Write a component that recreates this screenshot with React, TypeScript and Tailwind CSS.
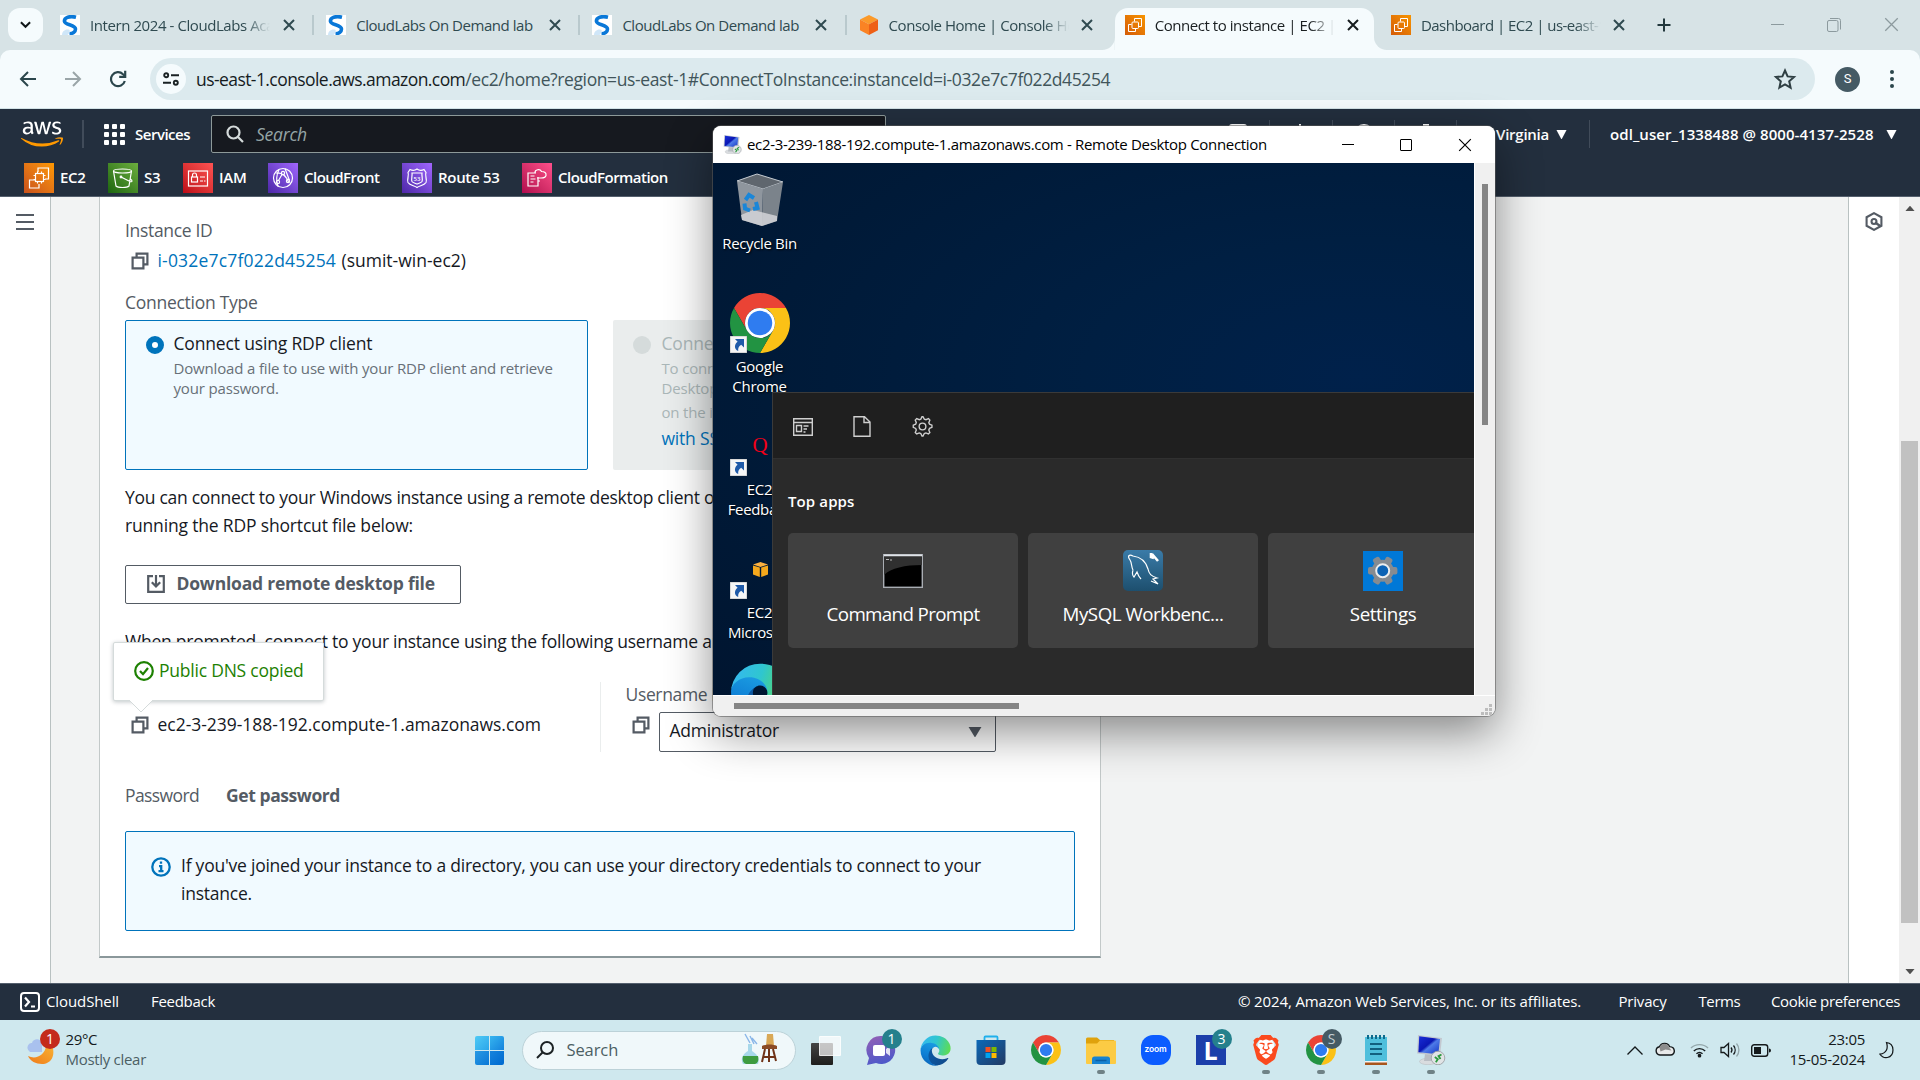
import type { ReactNode } from "react";
import { FaAws } from "react-icons/fa";
import { SiBrave } from "react-icons/si";

type P = { className?: string };

/* ---------- shared icons ---------- */

const Chrome = ({ className = "" }: P) => (
  <svg viewBox="0 0 48 48" className={className}>
    <path d="M24 12H44.78A24 24 0 0 0 3.22 12L13.6 30A12 12 0 0 1 24 12z" fill="#ea4335" />
    <path d="M34.4 30L24 48A24 24 0 0 0 44.78 12H24A12 12 0 0 1 34.4 30z" fill="#fbc116" />
    <path d="M13.6 30L3.22 12A24 24 0 0 0 24 48L34.4 30A12 12 0 0 1 13.6 30z" fill="#229342" />
    <circle cx="24" cy="24" r="12" fill="#fff" />
    <circle cx="24" cy="24" r="9.8" fill="#2f7cf0" />
  </svg>
);

const Edge = ({ className = "" }: P) => (
  <svg viewBox="0 0 264 264" className={className}>
    <defs>
      <linearGradient id="edgeA" x1="0" y1="0.3" x2="1" y2="0.7">
        <stop offset="0" stopColor="#0c59a4" />
        <stop offset="1" stopColor="#114a8b" />
      </linearGradient>
      <linearGradient id="edgeB" x1="0.6" y1="0" x2="0.3" y2="1">
        <stop offset="0" stopColor="#1b9de2" />
        <stop offset="0.6" stopColor="#0f7ed4" />
        <stop offset="1" stopColor="#0b64b8" />
      </linearGradient>
      <linearGradient id="edgeC" x1="0" y1="0.3" x2="1" y2="0.5">
        <stop offset="0" stopColor="#35b8f1" />
        <stop offset="0.5" stopColor="#2fc6cf" />
        <stop offset="1" stopColor="#5ddc56" />
      </linearGradient>
    </defs>
    <path fill="url(#edgeA)" d="M235.68 195.46a93.73 93.73 0 0 1-10.54 4.71 101.87 101.87 0 0 1-35.9 6.46c-47.32 0-88.54-32.55-88.54-74.32A31.48 31.48 0 0 1 117.13 105c-42.8 1.8-53.8 46.4-53.8 72.53 0 73.88 68.09 81.37 82.76 81.37 7.91 0 19.84-2.3 27-4.56l1.31-.44a128.34 128.34 0 0 0 66.6-52.8 4 4 0 0 0-5.32-5.64z" />
    <path fill="url(#edgeB)" d="M110.34 246.34A79.2 79.2 0 0 1 87.6 225a80.72 80.72 0 0 1 29.53-120c3.12-1.47 8.45-4.13 15.54-4a32.35 32.35 0 0 1 25.69 13 31.88 31.88 0 0 1 6.36 18.66c0-.21 24.46-79.6-80-79.6-43.9 0-80 41.66-80 78.21a130.15 130.15 0 0 0 12.11 56 128 128 0 0 0 156.38 67.11 75.55 75.55 0 0 1-62.78-8z" />
    <path fill="url(#edgeC)" d="M156.94 153.73c-.81 1.05-3.3 2.5-3.3 5.66 0 2.61 1.7 5.12 4.72 7.23 14.38 10 41.49 8.68 41.56 8.68a59.56 59.56 0 0 0 30.27-8.35 61.38 61.38 0 0 0 30.43-52.88c.26-22.41-8-37.31-11.34-43.91C228.11 28.92 182.36 5 132.6 5a128 128 0 0 0-128 126.2c.48-36.54 36.8-66.05 80-66.05 3.5 0 23.46.34 42 10.07 16.34 8.58 24.9 18.94 30.85 29.21 6.18 10.67 7.28 24.15 7.28 29.52s-2.74 13.33-7.79 19.78z" />
  </svg>
);

const RdpIcon = ({ className = "" }: P) => (
  <svg viewBox="0 0 30 30" className={className}>
    <defs>
      <linearGradient id="rdpScreen" x1="0" y1="0" x2="1" y2="1">
        <stop offset="0" stopColor="#1a2fd8" />
        <stop offset="0.45" stopColor="#0a17b4" />
        <stop offset="0.55" stopColor="#4e7be8" />
        <stop offset="1" stopColor="#1234c4" />
      </linearGradient>
    </defs>
    <ellipse cx="12" cy="26.500" rx="8.500" ry="3.200" fill="#d9dcdf" stroke="#b4b9bd" strokeWidth=".5" />
    <path d="M9 19h8l1 7H8z" fill="#b9bec4" />
    <path d="M2 0L26 3 24 21 1 18.500z" fill="#c3c8d0" />
    <path d="M3.200 1.300L24 3.900 22.300 19.200 2.400 17.200z" fill="url(#rdpScreen)" />
    <circle cx="22" cy="23" r="6.800" fill="#e1e4e6" stroke="#9da2a6" strokeWidth="0.9" />
    <path d="M18.800 22l3 2.200-2 3M25.500 19.500l-3 1.600 2 3" stroke="#2c9a3e" strokeWidth="1.800" fill="none" />
  </svg>
);

const Copy = ({ className = "" }: P) => (
  <svg viewBox="0 0 18 18" className={`size-[18px] shrink-0 ${className}`} fill="none" stroke="#545b64" strokeWidth="2.200">
    <path d="M1.600 5.600h10.800v10.800H1.600z" />
    <path d="M5.600 5V1.600h10.800v10.800H13" />
  </svg>
);

const Triangle = ({ className = "" }: P) => (
  <svg viewBox="0 0 12 9" preserveAspectRatio="none" className={className} fill="currentColor">
    <path d="M0.500 0h11L6.300 9h-.6z" />
  </svg>
);

const Cross = ({ className = "" }: P) => (
  <svg viewBox="0 0 12 12" className={className} fill="none" stroke="currentColor">
    <path d="M1 1l10 10M11 1L1 11" />
  </svg>
);

const Ec2Lines = () => (
  <g fill="none" stroke="#fff" strokeWidth="1.200">
    <path d="M11 17H5.500v8H15v-4" />
    <path d="M14 9V5h10.500v11H21" />
    <rect x="11.500" y="10.500" width="8" height="8" />
    <path d="M13.500 8.500v2M17.500 8.500v2M13.500 18.500v2M17.500 18.500v2M9.500 12.500h2M9.500 16.500h2M19.500 12.500h2M19.500 16.500h2" />
  </g>
);

const Ec2Favicon = () => (
  <div className="size-5 shrink-0 bg-linear-to-tr from-[#d45b07] to-[#f79400]">
    <svg viewBox="0 0 20 20" className="size-5" fill="none" stroke="#fff" strokeWidth="1">
      <path d="M6.500 9.500H3.500v7h7v-2.500M9.500 6.500V3.500h7v8h-2.500" />
      <rect x="7" y="7" width="6.500" height="6.500" rx="1" />
    </svg>
  </div>
);

const CloudLabsFavicon = () => (
  <svg viewBox="0 0 20 20" className="size-5 shrink-0">
    <rect width="20" height="20" fill="#fff" />
    <path d="M16 2.200C9 .5 4 3 4.500 6.500c.5 3.500 11 3 11 7.500 0 2.500-2.500 4.500-6 4.800" fill="none" stroke="#0a78d8" strokeWidth="3.600" />
    <path d="M2 20c0-4 4-6.500 7.500-5 1 2-1 4-2 5z" fill="#cfe6f8" />
  </svg>
);

const CubeFavicon = () => (
  <svg viewBox="0 0 20 20" className="size-5 shrink-0">
    <path d="M10 0l9 4.500L10 9.200 1 4.500z" fill="#fb9a2a" />
    <path d="M1 4.500l9 4.700V20l-9-4.700z" fill="#fa8324" />
    <path d="M19 4.500l-9 4.700V20l9-4.700z" fill="#ee6016" />
  </svg>
);

/* ---------- browser chrome ---------- */

function Tab({ icon, title, active, sep, ls }: { icon: ReactNode; title: string; active?: boolean; sep?: boolean; ls: string }) {
  return (
    <div className="relative flex h-[42px] w-[266.2px] shrink-0 items-center pb-[8px] pl-[12px]">
      {active && (
        <>
          <div className="absolute top-0 right-[5px] bottom-0 left-[2px] rounded-t-[13px] bg-[#f5fbfd]" />
          <div className="absolute bottom-0 -left-[11px] size-[13px] rounded-br-[13px] shadow-[5px_5px_0_4px_#f5fbfd] [clip-path:inset(0)]" />
          <div className="absolute -right-[8px] bottom-0 size-[13px] rounded-bl-[13px] shadow-[-5px_5px_0_4px_#f5fbfd] [clip-path:inset(0)]" />
        </>
      )}
      <div className="relative flex w-full items-center">
        {icon}
        <div className={`ml-[10px] w-[180px] overflow-hidden text-[15px] leading-5 whitespace-nowrap ${ls} ${active ? "text-[#1a1f21]" : "text-[#2f4a50]"} ${title.includes("Demand") ? "" : "[mask-image:linear-gradient(90deg,#000_155px,transparent_180px)]"}`}>{title}</div>
        <Cross className={`ml-[12.500px] size-[12px] shrink-0 stroke-2 ${active ? "text-[#161c1e]" : "text-[#2f4a50]"}`} />
      </div>
      {sep && <div className="absolute top-[7px] right-0 h-5 w-[2px] bg-[#b9c9cd]" />}
    </div>
  );
}

function BrowserTop() {
  return (
    <>
      <div className="flex h-[50px] items-start bg-[#d7e3e6] pt-[8px] pl-[8px]">
        <div className="flex h-[34px] w-[35px] items-center justify-center rounded-[12px] bg-[#f5fbfd]">
          <svg viewBox="0 0 12 8" className="w-[11px]" fill="none" stroke="#101719" strokeWidth="2.200"><path d="M1 1.300l5 5 5-5" /></svg>
        </div>
        <div className="ml-[5px] flex">
          <Tab icon={<CloudLabsFavicon />} title="Intern 2024 - CloudLabs Academy" sep ls="tracking-[-0.42px]" />
          <Tab icon={<CloudLabsFavicon />} title="CloudLabs On Demand lab" sep ls="tracking-[-0.45px]" />
          <Tab icon={<CloudLabsFavicon />} title="CloudLabs On Demand lab" sep ls="tracking-[-0.45px]" />
          <Tab icon={<CubeFavicon />} title="Console Home | Console Home" ls="tracking-[-0.45px]" />
          <Tab icon={<Ec2Favicon />} title="Connect to instance | EC2 | us-east" active ls="tracking-[-0.45px]" />
          <Tab icon={<Ec2Favicon />} title="Dashboard | EC2 | us-east-1" ls="tracking-[-0.53px]" />
        </div>
        <svg viewBox="0 0 14 14" className="mt-[10px] ml-[11.500px] size-[14px]" stroke="#22383d" strokeWidth="2"><path d="M7 .5v13M.5 7h13" /></svg>
        <div className="ml-auto flex items-center gap-[43px] pt-[9px] pr-[21px] text-[#8c9a9e]">
          <div className="h-px w-[13px] bg-current" />
          <svg viewBox="0 0 14 14" className="size-[14px]" fill="none" stroke="currentColor"><rect x=".5" y="2.500" width="10.500" height="11" rx="1.500" /><path d="M3 .5h8.500a2 2 0 0 1 2 2v9" /></svg>
          <Cross className="size-[15px]" />
        </div>
      </div>
      <div className="bg-[#d7e3e6]">
        <div className="flex h-[59px] items-center rounded-t-[10px] border-b border-[#d3e3e7] bg-[#f5fbfd]">
          <svg viewBox="0 0 18 16" className="ml-[19px] h-[16px] w-[18px]" fill="none" stroke="#2b464c" strokeWidth="2"><path d="M17 8H2M9 1L2 8l7 7" /></svg>
          <svg viewBox="0 0 18 16" className="ml-[27px] h-[16px] w-[18px]" fill="none" stroke="#9aa5a8" strokeWidth="2"><path d="M1 8h15M9 1l7 7-7 7" /></svg>
          <svg viewBox="0 0 18 18" className="ml-[27px] size-[18px]" fill="none" stroke="#2b464c" strokeWidth="2.200"><path d="M15.800 11A7 7 0 1 1 14 4.200L16 6" /><path d="M16.200 0.800v6H10.200" /></svg>
          <div className="ml-[23px] flex h-[42px] w-[1665px] items-center rounded-full bg-[#dceaee] pl-[6px]">
            <div className="flex size-[30px] items-center justify-center rounded-full bg-[#f5fbfd]">
              <svg viewBox="0 0 16 14" className="w-[16px]" fill="none" stroke="#1a2224" strokeWidth="1.900"><circle cx="3.200" cy="3.200" r="2" /><path d="M8 3.200h8M0 10.800h8" /><circle cx="12.800" cy="10.800" r="2" /></svg>
            </div>
            <div className="ml-[10px] text-[17.5px] leading-6 whitespace-nowrap text-[#41555a]">
              <span className="tracking-[-0.57px] text-[#161c1e]">us-east-1.console.aws.amazon.com</span><span className="tracking-[-0.385px]">/ec2/home?region=us-east-1#ConnectToInstance:instanceId=i-032e7c7f022d45254</span>
            </div>
            <svg viewBox="0 0 24 24" className="mr-[18px] ml-auto size-[24px]" fill="none" stroke="#2f3f43" strokeWidth="2"><path d="M12 3.500l2.600 5.900 6.400.6-4.800 4.300 1.400 6.300L12 17.300l-5.600 3.300 1.400-6.300L3 10l6.400-.6z" /></svg>
          </div>
          <div className="ml-[20px] flex size-[25px] items-center justify-center rounded-full bg-[#455a64] font-['Roboto'] text-[13px] text-white">S</div>
          <div className="ml-[30px] flex flex-col gap-[3px]"><i className="size-1 rounded-full bg-[#2b464c]" /><i className="size-1 rounded-full bg-[#2b464c]" /><i className="size-1 rounded-full bg-[#2b464c]" /></div>
        </div>
      </div>
    </>
  );
}

/* ---------- AWS console ---------- */

function Fav({ w, bg, label, ls, children }: { w: string; bg: string; label: string; ls: string; children: ReactNode }) {
  return (
    <div className={`flex shrink-0 items-center ${w}`}>
      <svg viewBox="0 0 30 30" className={`size-[30px] ${bg}`} fill="none" stroke="#fff" strokeWidth="1.200">{children}</svg>
      <span className={`-mt-px ml-[6px] whitespace-nowrap ${ls}`}>{label}</span>
    </div>
  );
}

function AwsHeader() {
  return (
    <div className="h-[88px] border-b border-[#545f6d] bg-[#232f3e] text-[15px] leading-5 font-semibold text-white">
      <div className="flex h-[50px] items-center">
        <div className="relative ml-[21px] h-[34px] w-[42px]">
          <FaAws className="absolute inset-0 size-[42px] -translate-y-[4px] text-white [clip-path:inset(0_0_42%_0)]" />
          <FaAws className="absolute inset-0 size-[42px] -translate-y-[4px] text-[#ff9900] [clip-path:inset(58%_0_0_0)]" />
        </div>
        <div className="ml-[19px] h-[28px] w-[2px] bg-[#414c5a]" />
        <div className="ml-[20px] grid grid-cols-3 gap-[3px]">
          {Array.from({ length: 9 }, (_, i) => <i key={i} className="size-[5px] rounded-[1px] bg-white" />)}
        </div>
        <span className="ml-[10px] w-[76px] tracking-[-0.49px]">Services</span>
        <div className="flex h-[38px] w-[675px] items-center rounded-[2px] border border-[#8d9999] bg-[#16191f]">
          <svg viewBox="0 0 18 18" className="ml-[14px] size-[18px]" fill="none" stroke="#d5dbdb" strokeWidth="2.200"><circle cx="7.500" cy="7.500" r="6" /><path d="M12 12l5 5" /></svg>
          <span className="ml-[12px] text-[17.500px] font-normal tracking-[-0.230px] text-[#95a5a6] italic">Search</span>
        </div>
        <svg viewBox="0 0 18 20" className="ml-[343px] h-[20px] w-[18px]" fill="none" stroke="#fff" strokeWidth="2"><rect x="1" y="1" width="16" height="18" rx="2" /></svg>
        <div className="ml-[22px] h-[28px] w-px bg-[#414c5a]" />
        <svg viewBox="0 0 18 20" className="ml-[21px] h-[20px] w-[18px]" fill="none" stroke="#fff" strokeWidth="2"><path d="M9 0v3M3 15V9a6 6 0 0 1 12 0v6z" /></svg>
        <div className="ml-[23px] h-[28px] w-px bg-[#414c5a]" />
        <svg viewBox="0 0 20 20" className="ml-[21px] size-[20px]" fill="none" stroke="#fff" strokeWidth="2"><circle cx="10" cy="10" r="9" /></svg>
        <div className="ml-[20px] h-[28px] w-px bg-[#414c5a]" />
        <svg viewBox="0 0 20 20" className="ml-[21px] size-[20px]" fill="none" stroke="#fff" strokeWidth="2"><path d="M8 1h4v3l4 2 3-1v5l-3 4-4 4H8l-5-6V6l5-2z" /></svg>
        <div className="ml-[20px] h-[28px] w-px bg-[#414c5a]" />
        <span className="ml-[20px] w-[72px] text-right tracking-[-0.250px] whitespace-nowrap">N. Virginia</span>
        <Triangle className="ml-[7px] h-[9px] w-[11px]" />
        <div className="ml-[22px] h-[28px] w-px bg-[#414c5a]" />
        <span className="ml-[20px] w-[268px] tracking-[0.070px] whitespace-nowrap">odl_user_1338488 @ 8000-4137-2528</span>
        <Triangle className="ml-[8px] h-[9px] w-[11px]" />
      </div>
      <div className="flex h-[37px] items-center pl-[24px]">
        <Fav w="w-[84px]" bg="bg-linear-to-tr from-[#c8511b] to-[#ff9900]" label="EC2" ls="tracking-[-0.3px]"><Ec2Lines /></Fav>
        <Fav w="w-[75px]" bg="bg-linear-to-tr from-[#1b660f] to-[#6cae3e]" label="S3" ls="tracking-[-0.3px]">
          <ellipse cx="14.500" cy="8" rx="9" ry="2" /><path d="M5.500 8l2.500 15c2 2 11 2 13 0l2.500-15M13 14l9 4.500c2 .8 3-.5.5-2.500" /><circle cx="13" cy="14" r=".8" />
        </Fav>
        <Fav w="w-[85px]" bg="bg-linear-to-tr from-[#bd0816] to-[#ff5252]" label="IAM" ls="tracking-[-0.3px]">
          <rect x="5.500" y="8" width="19" height="15" /><rect x="8.500" y="14" width="6" height="5" /><path d="M9.500 14v-2a2 2 0 0 1 4 0v2M17 14h5M17 18h3M21 18h1.500" />
        </Fav>
        <Fav w="w-[134px]" bg="bg-linear-to-tr from-[#4d27a8] to-[#a166ff]" label="CloudFront" ls="tracking-[-0.530px]">
          <circle cx="15" cy="15" r="9.500" /><circle cx="15" cy="10" r="1.600" /><circle cx="10" cy="19" r="1.600" /><circle cx="20" cy="18" r="1.600" /><path d="M14 11.500l-3.500 6M16 11.500l3.500 5M11 6.500c-3 6-3 11-1 17M8 10c6-1 11 4 13 10M17 5.500l4.500 12" />
        </Fav>
        <Fav w="w-[120px]" bg="bg-linear-to-tr from-[#4d27a8] to-[#a166ff]" label="Route 53" ls="tracking-[-0.3px]">
          <path d="M8 6.500c2 1 5 1 7-.5 2 1.500 5 1.500 7 .5l2 3c-1.500 3 1.500 7 0 10-2 3-6 3-9 5-3-2-7-2-9-5-1.500-3 1.500-7 0-10z" /><path d="M10 10h10c-.5 3 1 6 0 8.500-1 1.500-3 1.500-5 2.500-2-1-4-1-5-2.500-1-2.500.5-5.500 0-8.500z" /><text x="15" y="17.500" textAnchor="middle" fontSize="6" fill="#fff" stroke="none">53</text>
        </Fav>
        <Fav w="w-[200px]" bg="bg-linear-to-tr from-[#b0084d] to-[#ff4f8b]" label="CloudFormation" ls="tracking-[-0.530px]">
          <path d="M14 10H6v13h10V14M8.500 13h4M8.500 16h5M8.500 19h3M13 9.500c0-3 5-4 6.500-1 3 0 5 1.500 4.500 4-.5 2-2.500 2.500-5 2.500h-4M16 18h2" />
        </Fav>
      </div>
    </div>
  );
}

function Tooltip() {
  return (
    <div className="absolute top-[445px] left-[13px] z-10 h-[59px] w-[211px] rounded-[2px] border border-[#d5dbdb] bg-white shadow-[0_1px_4px_rgba(0,28,36,0.25)]">
      <div className="flex h-full items-center pb-px pl-[20px]">
        <svg viewBox="0 0 20 20" className="size-5" fill="none" stroke="#1d8102" strokeWidth="2.200"><circle cx="10" cy="10" r="8.800" /><path d="M6 10l3 3.200 5-6.200" /></svg>
        <span className="ml-[5px] text-[17.500px] tracking-[-0.220px] text-[#1d8102]">Public DNS copied</span>
      </div>
      <svg viewBox="0 0 26 14" className="absolute top-[56px] left-[14px] h-[14px] w-[26px]"><path d="M1 1l12 12L25 1" fill="#fff" stroke="#d5dbdb" /><path d="M0 0h26v1H0z" fill="#fff" /></svg>
    </div>
  );
}

function ConnectCard() {
  return (
    <div className="relative ml-[48px] h-[761px] w-[1002px] border-x border-b-2 border-[#c3c9c9] border-b-[#8a979a] bg-white pt-[20px] pr-[24px] pl-[25px] text-[17.500px] leading-[27.500px] text-[#16191f]">
      <div className="tracking-[-0.320px] text-[#545b64]">Instance ID</div>
      <div className="mt-[2.500px] flex items-center pl-[6px] whitespace-nowrap">
        <Copy />
        <span className="ml-[8.500px] w-[184px] tracking-[0.190px] text-[#0073bb]">i-032e7c7f022d45254</span>
        <span>(sumit-win-ec2)</span>
      </div>
      <div className="mt-[14px] tracking-[-0.270px] text-[#545b64]">Connection Type</div>
      <div className="mt-[4px] -ml-[0.500px] flex gap-[25px]">
        <div className="flex h-[150px] w-[463px] shrink-0 rounded-[2px] border border-[#0073bb] bg-[#f1faff] pt-[9px] pl-[20px]">
          <div className="mt-[6px] size-[18px] shrink-0 rounded-full border-[6px] border-[#0073bb] bg-white" />
          <div className="ml-[10px]">
            <div className="tracking-[-0.170px]">Connect using RDP client</div>
            <div className="w-[400px] pt-[0.500px] text-[15px] leading-5 tracking-[-0.160px] text-[#687078]">Download a file to use with your RDP client and retrieve<br />your password.</div>
          </div>
        </div>
        <div className="flex h-[150px] w-[463px] shrink-0 rounded-[2px] bg-[#eaeded] pt-[10px] pl-[20.500px]">
          <div className="mt-[6px] size-[18px] shrink-0 rounded-full bg-[#d5dbdb]" />
          <div className="ml-[10.500px] text-[#aab7b8]">
            <div className="tracking-[-0.200px]">Connect using Fleet Manager</div>
            <div className="pt-[0.500px] text-[15px] leading-5 tracking-[-0.170px]">To connect to the instance using Fleet Manager Remote<br />Desktop, the SSM Agent must be installed and running</div>
            <div className="pt-px text-[15px] leading-[27px] tracking-[-0.170px]">on the instance. For more information, see Working</div>
            <div className="-mt-px tracking-[-0.200px] text-[#0073bb]">with SSM Agent</div>
          </div>
        </div>
      </div>
      <div className="mt-[14px] tracking-[-0.280px] whitespace-nowrap">You can connect to your Windows instance using a remote desktop client of your choice, and by downloading and<br /><span className="tracking-[-0.170px]">running the RDP shortcut file below:</span></div>
      <div className="mt-[26px] -ml-[0.500px] flex h-[39px] w-[336px] items-center rounded-[2px] border border-[#545b64] pb-px pl-[21px] font-bold tracking-[-0.210px] text-[#545b64]">
        <svg viewBox="0 0 18 18" className="size-[18px]" fill="none" stroke="#545b64" strokeWidth="2.200"><path d="M6 1.200H1.200v15.600h15.600V1.200H12M9 0v11M4.800 7.200L9 11.400l4.200-4.200" /></svg>
        <span className="ml-[12px]">Download remote desktop file</span>
      </div>
      <div className="mt-[24px] tracking-[-0.240px] whitespace-nowrap">When prompted, connect to your instance using the following username and password:</div>
      <Tooltip />
      <div className="mt-[26px] flex h-[70px]">
        <div className="w-[476px] border-r border-[#eaeded]">
          <div className="-mt-[4px] tracking-[-0.250px] text-[#545b64]">Public DNS</div>
          <div className="mt-[6px] flex items-center pl-[6px]"><Copy /><span className="ml-[8.500px] tracking-[-0.030px]">ec2-3-239-188-192.compute-1.amazonaws.com</span></div>
        </div>
        <div className="pl-[24.500px]">
          <div className="-mt-px tracking-[-0.350px] text-[#545b64]">Username Info</div>
          <div className="mt-px flex items-start pl-[6px]">
            <Copy className="mt-[7px]" />
            <div className="mt-[3px] ml-[9px] flex h-[40px] w-[337px] items-center justify-between rounded-[2px] border border-[#545b64] pr-[13px] pl-[10px]">
              <span className="-mt-[3px] tracking-[-0.280px]">Administrator</span>
              <Triangle className="h-[10px] w-[14px] text-[#545b64]" />
            </div>
          </div>
        </div>
      </div>
      <div className="mt-[30px] flex text-[#545b64]">
        <span className="w-[101px] tracking-[-0.580px]">Password</span>
        <span className="font-bold tracking-[-0.420px]">Get password</span>
      </div>
      <div className="mt-[22px] -ml-[0.500px] flex h-[100px] w-[950px] rounded-[2px] border border-[#0073bb] bg-[#f1faff] pt-[20px] pl-[25px]">
        <svg viewBox="0 0 20 20" className="mt-[5px] size-5 shrink-0" fill="none" stroke="#0073bb" strokeWidth="2.300"><circle cx="10" cy="10" r="8.700" /><path d="M10 4.500v2.200M8 9.200h2.200v5M7.500 14.200h5" /></svg>
        <div className="ml-[10.500px] tracking-[-0.235px] whitespace-nowrap">If you've joined your instance to a directory, you can use your directory credentials to connect to your<br />instance.</div>
      </div>
    </div>
  );
}

function Console() {
  return (
    <div className="flex h-[786px] overflow-hidden">
      <div className="w-[51px] border-r border-[#b9c1c1] bg-white pt-[17px] pl-[16px]">
        <div className="flex w-[18px] flex-col gap-[5px]"><i className="h-[2px] bg-[#545b64]" /><i className="h-[2px] bg-[#545b64]" /><i className="h-[2px] bg-[#545b64]" /></div>
      </div>
      <div className="w-[1797px] bg-[#f2f3f3]"><ConnectCard /></div>
      <div className="w-[51px] border-l border-[#b9c1c1] bg-white pt-[15px] pl-[16px]">
        <svg viewBox="0 0 18 20" className="h-[19px] w-[18px]" fill="none" stroke="#545b64" strokeWidth="2.200"><path d="M9 1.200l7.800 4.300v9L9 18.800 1.200 14.500v-9z" /><circle cx="9" cy="10" r="2.600" /><path d="M10 11l6 4" strokeWidth="2.600" /></svg>
      </div>
      <div className="flex w-[21px] flex-col items-center bg-[#f0f0f0] pt-[9px] pb-[9px] text-[#505050]">
        <Triangle className="h-[5px] w-[10px] rotate-180" />
        <div className="mt-[230px] h-[482px] w-[17px] bg-[#c1c1c1]" />
        <Triangle className="mt-auto h-[5px] w-[10px]" />
      </div>
    </div>
  );
}

function AwsFooter() {
  return (
    <div className="flex h-[37px] items-center border-t border-[#545f6d] bg-[#232f3e] pb-px text-[15px] font-medium whitespace-nowrap text-white">
      <svg viewBox="0 0 20 20" className="ml-[20px] size-5" fill="none" stroke="#fff" strokeWidth="2"><rect x="1" y="1" width="18" height="18" rx="3" /><path d="M5 5.500l4 4.500-4 4.500M11 14.500h4" strokeWidth="2.200" /></svg>
      <span className="ml-[6px] w-[105px] tracking-[-0.100px]">CloudShell</span>
      <span className="tracking-[-0.290px]">Feedback</span>
      <div className="ml-auto flex pr-[20px]">
        <span className="w-[380.500px] tracking-[-0.130px]">© 2024, Amazon Web Services, Inc. or its affiliates.</span>
        <span className="w-[80px] tracking-[-0.200px]">Privacy</span>
        <span className="w-[72.500px] tracking-[-0.400px]">Terms</span>
        <span className="w-[129px] tracking-[-0.340px]">Cookie preferences</span>
      </div>
    </div>
  );
}

/* ---------- remote desktop window ---------- */

const Shortcut = () => (
  <svg viewBox="0 0 17 17" className="absolute bottom-0 left-0 size-[17px]">
    <rect width="17" height="17" fill="#f6f6f6" stroke="#b9b9b9" />
    <path d="M5 3h9v8.500l-2.800-2.800C8.500 10.500 8 12 8.200 15 4 13 4 8.500 7.600 5.700z" fill="#1f5aa8" />
  </svg>
);

function DesktopItem({ children, label, shortcut, ls = "tracking-[-0.35px]" }: { children: ReactNode; label: ReactNode; shortcut?: boolean; ls?: string }) {
  return (
    <div className="flex h-[123px] w-[94px] shrink-0 flex-col items-center">
      <div className="relative flex size-[60px] items-center justify-center">{children}{shortcut && <Shortcut />}</div>
      <div className={`mt-[2.500px] -ml-px text-center text-[15px] leading-5 whitespace-nowrap text-white [text-shadow:1px_1px_2px_#000] ${ls}`}>{label}</div>
    </div>
  );
}

function AppCard({ label, ls, children }: { label: string; ls: string; children: ReactNode }) {
  return (
    <div className="flex h-[115px] w-[230px] shrink-0 flex-col items-center rounded-[5px] bg-[#404040] pt-[17px]">
      <div className="flex h-[41px] items-center justify-center">{children}</div>
      <div className={`mt-[10px] text-[18.750px] leading-[26px] text-white ${ls}`}>{label}</div>
    </div>
  );
}

const GEAR = "M10 1.500l1.200 2.300 1.600.5 2.400-1 1.300 1.400-1 2.400.7 1.500 2.300 1v2l-2.300 1-.7 1.500 1 2.400-1.400 1.400-2.400-1-1.500.6-1.200 2.300H9l-1.100-2.300-1.500-.6-2.400 1-1.400-1.400 1-2.400-.6-1.500-2.300-1v-2l2.300-1 .6-1.500-1-2.400L4 3.300l2.400 1 1.500-.5L9 1.500z";

function RdpWindow() {
  return (
    <div className="absolute top-[126px] left-[713px] h-[590px] w-[782px] overflow-visible rounded-[8px] shadow-[0_0_0_1px_rgba(90,90,90,0.55),0_16px_46px_rgba(0,0,0,0.45)]">
      <div className="flex h-full flex-col overflow-hidden rounded-[8px] bg-[#f0f0f0]">
        <div className="flex h-[37px] shrink-0 items-center bg-white pl-[10px] text-black">
          <RdpIcon className="size-[19px]" />
          <span className="ml-[5px] text-[15px] tracking-[-0.325px] whitespace-nowrap">ec2-3-239-188-192.compute-1.amazonaws.com - Remote Desktop Connection</span>
          <div className="ml-auto flex items-center gap-[46px] pr-[23px]">
            <div className="h-px w-[12px] bg-black" />
            <div className="size-[12px] rounded-[1px] border border-black" />
            <Cross className="size-[14px]" />
          </div>
        </div>
        <div className="flex h-[532px] shrink-0">
          <div className="relative h-[532px] w-[761px] overflow-hidden bg-[radial-gradient(ellipse_at_85%_40%,#00214b_0%,#001f42_30%,#001a38_65%,#001530_100%)]">
            <div className="flex flex-col pt-[7px]">
              <DesktopItem label="Recycle Bin">
                <svg viewBox="0 0 46 54" className="h-[54px] w-[46px]">
                  <path d="M0 8L20 1 46 9 26 16z" fill="#5f666e" stroke="#c6ccd2" />
                  <path d="M0 8l26 8-1 37L5 47z" fill="#8f969e" />
                  <path d="M46 9l-20 7-1 37 15-5z" fill="#7b838b" />
                  <path d="M4 42l12-5 24 6v5l-15 5-20-6z" fill="#d3d5d8" opacity=".85" />
                  <g fill="none" stroke="#1a86d8" strokeWidth="4"><path d="M8.500 27l3.500-5 5 3M19 29l1.500 6-4.500 1M13 37.500l-5-2-.500-5" /></g>
                </svg>
              </DesktopItem>
              <DesktopItem label={<>Google<br />Chrome</>} shortcut ls="tracking-[-0.3px]"><Chrome className="size-[60px]" /></DesktopItem>
              <DesktopItem label={<>EC2<br />Feedback</>} shortcut><span className="-mt-[2px] font-['Liberation_Serif'] text-[21px] leading-5 text-[#f00019]">Q</span></DesktopItem>
              <DesktopItem label={<>EC2<br />Microsoft</>} shortcut>
                <svg viewBox="0 0 15 15" className="size-[15px]"><path d="M7.500 0L15 2.500 7.500 5 0 2.500z" fill="#fbb040" /><path d="M0 3.500l6.800 2V15L0 12.500zM15 3.500l-6.800 2V15l6.800-2.500z" fill="#f5a81c" /></svg>
              </DesktopItem>
              <DesktopItem label="Microsoft Edge"><Edge className="size-[61px]" /></DesktopItem>
            </div>
            <div className="absolute top-[229px] left-[59px] h-[303px] w-[702px] overflow-hidden border-t border-l border-[#3a3a3a] bg-[#2a2a2a]">
              <div className="flex h-[66px] items-center border-b border-[#303030] bg-[#1f1f1f] pt-[2px] pl-[20px] text-[#cfcfcf]">
                <svg viewBox="0 0 20 18" className="h-[18px] w-[20px]" fill="none" stroke="currentColor" strokeWidth="1.400"><path d="M.7.7h18.600v16.600H.7zM.7 4.500h18.600M3.500 7.500h5v6h-5zM10.500 8h5M10.500 11h3.500M10.500 14h2" /></svg>
                <svg viewBox="0 0 18 21" className="ml-[40px] h-[21px] w-[18px]" fill="none" stroke="currentColor" strokeWidth="1.400"><path d="M1 .7h10.500L17 6v14.200H1zM11 .7V6.500h6" /></svg>
                <svg viewBox="-0.500 0.800 20 20" className="ml-[41px] size-[21px]" fill="none" stroke="currentColor" strokeWidth="1.300"><path d={GEAR} /><circle cx="9.500" cy="10.800" r="3.200" /></svg>
              </div>
              <div className="mt-[30px] ml-[15px] text-[15px] leading-6 font-semibold tracking-[0.120px] text-white">Top apps</div>
              <div className="mt-[20px] ml-[15px] flex gap-[10px] whitespace-nowrap">
                <AppCard label="Command Prompt" ls="tracking-[-0.640px]">
                  <svg viewBox="0 0 40 34" className="h-[34px] w-[40px]">
                    <rect x=".7" y=".7" width="38.600" height="32.600" fill="#000" stroke="#a9adb3" strokeWidth="1.400" />
                    <path d="M1 1h38v10C22 11 8 14 1 21z" fill="#303030" /><path d="M1 .5h38v1.800H1z" fill="#dfe3e8" /><path d="M3 5.500h3M7 6h2" stroke="#ddd" strokeWidth=".8" />
                  </svg>
                </AppCard>
                <AppCard label="MySQL Workbenc..." ls="tracking-[-0.490px]">
                  <svg viewBox="0 0 40 41" className="h-[41px] w-[40px]" fill="none" stroke="#fff" strokeWidth="1.200">
                    <defs><linearGradient id="mysql" x1="0" y1="0" x2="0" y2="1"><stop offset="0" stopColor="#3a7ba8" /><stop offset="1" stopColor="#1d4f6e" /></linearGradient></defs>
                    <rect width="40" height="41" rx="5" fill="url(#mysql)" stroke="none" />
                    <path d="M10 20c-2-4-1-7-3-10-3-4-1-6 3-4 8 1 13 6 15 13 1 5 3 7 9 9l-4 1 5 5-7-3M10 20c-1 3 0 6 1 7l3-5c1 3 2 5 4 7" /><path d="M29 4l6 7M28 3v4l3 1" strokeWidth="2.600" />
                  </svg>
                </AppCard>
                <AppCard label="Settings" ls="tracking-[-0.380px]">
                  <svg viewBox="0 0 40 40" className="size-[40px]">
                    <rect width="40" height="40" fill="#0078d7" />
                    <g fill="#858b91"><circle cx="19.700" cy="19.700" r="11" />{[0, 60, 120].map((a) => <rect key={a} x="5" y="16" width="29.400" height="7.400" rx="2" transform={`rotate(${a} 19.700 19.700)`} />)}</g>
                    <circle cx="19.700" cy="19.700" r="6.500" fill="#0b63b5" stroke="#eceeef" strokeWidth="2" />
                  </svg>
                </AppCard>
              </div>
            </div>
          </div>
          <div className="flex-1 border-l border-white bg-[#f0f0f0] pt-[21px] pl-[7px]"><div className="h-[241px] w-[6px] bg-[#858585]" /></div>
        </div>
        <div className="flex h-[21px] items-center justify-between border-t border-white pr-[3px] pl-[21px]">
          <div className="mb-px h-[6px] w-[285px] bg-[#858585]" />
          <svg viewBox="0 0 11 11" className="mt-[6px] size-[11px]" fill="#bdbdbd"><path d="M8 0h3v3H8zM4 4h3v3H4zM8 4h3v3H8zM0 8h3v3H0zM4 8h3v3H4zM8 8h3v3H8z" /></svg>
        </div>
      </div>
    </div>
  );
}

/* ---------- taskbar ---------- */

function Task({ children, dot, badge, badgeCls = "bg-[#25808c] text-white" }: { children: ReactNode; dot?: boolean; badge?: string; badgeCls?: string }) {
  return (
    <div className="relative flex h-[60px] w-[55px] items-center justify-center">
      {children}
      {badge && <div className={`absolute top-[9px] left-[28.500px] flex size-[20px] items-center justify-center rounded-full text-[14px] leading-none ${badgeCls}`}>{badge}</div>}
      {dot && <i className="absolute bottom-[6px] h-[4px] w-[8px] rounded-full bg-[#6f8286]" />}
    </div>
  );
}

function Taskbar() {
  return (
    <div className="flex h-[60px] items-center bg-[#cfe8ee] text-[15px] leading-5 text-[#14191b]">
      <div className="relative ml-[25px] h-[60px] w-[40.500px]">
        <svg viewBox="0 0 36 44" className="absolute top-[7px] left-0 h-[44px] w-[36px]">
          <defs><linearGradient id="moonG" x1="1" y1="0" x2="0" y2="1"><stop offset="0" stopColor="#f9b233" /><stop offset="1" stopColor="#ef7a1a" /></linearGradient></defs>
          <path d="M3 29c8 4 17-1 18-10l6-1c4 11-1 19-10 19-6 0-12-3-14-8z" fill="url(#moonG)" />
          <path d="M5 25a5 5 0 0 1-1-8c1-1 2-1 3-1 1-5 9-5 10 0v9z" fill="#a9c1ee" />
        </svg>
        <div className="absolute top-[9px] left-[15px] flex size-[20px] items-center justify-center rounded-full bg-[#c42b1c] text-[14px] text-white">1</div>
      </div>
      <div className="w-[409px] pb-[2px]"><div className="tracking-[-0.350px]">29°C</div><div className="tracking-[-0.300px] text-[#4c5f64]">Mostly clear</div></div>
      <div className="grid size-[29px] grid-cols-2 gap-px overflow-hidden rounded-[2px]">
        <i className="bg-linear-to-br from-[#4fcaf5] to-[#2aa6ea]" /><i className="bg-linear-to-br from-[#36b4ef] to-[#1583dd]" /><i className="bg-linear-to-br from-[#2799e4] to-[#0a78d6]" /><i className="bg-linear-to-br from-[#1684dd] to-[#0069cf]" />
      </div>
      <div className="ml-[18px] flex h-[39px] w-[274px] items-center rounded-full border border-[#bcd2d8] bg-[#f0f8fa] pl-[13px]">
        <svg viewBox="0 0 18 18" className="size-[18px]" fill="none" stroke="#1c2224" strokeWidth="2"><circle cx="11" cy="7" r="6" /><path d="M6.500 11.500L1 17" /></svg>
        <span className="ml-[13px] text-[16.500px] tracking-[-0.100px] text-[#4c5f64]">Search</span>
        <svg viewBox="0 0 38 34" className="mr-[16px] mb-[2px] ml-auto h-[34px] w-[38px]">
          <path d="M9 11L4 2M13 12L9 4M11 6l5 6" stroke="#8ab6e8" strokeWidth="1.400" fill="none" />
          <path d="M7 12h4v7c5 3 8 7 6 13H2c-3-5 0-10 5-13z" fill="#a8d8ea" /><path d="M2 24h15c1 4 0 7-3 8H5c-3-1-4-4-3-8z" fill="#3f9c40" />
          <path d="M26 2h6l1 12h-8z" fill="#d9a856" /><path d="M21 14c4-2 11-2 15 0v3H21z" fill="#8a4b26" />
          <path d="M24 17l-3 13M28 17v13M32 17l3 12M22 25h12" stroke="#6f3318" strokeWidth="2" />
        </svg>
      </div>
      <div className="ml-[2.500px] flex">
        <Task><div className="relative size-[30px]"><div className="absolute bottom-0 left-0 size-[22px] rounded-[1px] bg-linear-to-b from-[#444] to-[#1e1e1c]" /><div className="absolute top-[1px] right-0 h-[20px] w-[22px] rounded-[1px] border border-white/60 bg-white/70" /></div></Task>
        <Task badge="1">
          <svg viewBox="0 0 30 30" className="size-[30px]"><defs><linearGradient id="teams" x1="0" y1="0" x2=".3" y2="1"><stop offset="0" stopColor="#9560b5" /><stop offset="1" stopColor="#5059c9" /></linearGradient></defs><path d="M15 1a14 14 0 1 1-5 27L1 30l2-7A14 14 0 0 1 15 1z" fill="url(#teams)" /><rect x="7" y="10" width="12" height="11" rx="2" fill="#fff" /><path d="M20 14l4-3v10l-4-3z" fill="#e4e2f5" /></svg>
        </Task>
        <Task><Edge className="size-[31px]" /></Task>
        <Task>
          <svg viewBox="0 0 30 30" className="size-[30px]"><defs><linearGradient id="store" x1="0" y1="0" x2="1" y2="1"><stop offset="0" stopColor="#0c69b8" /><stop offset="1" stopColor="#233a63" /></linearGradient></defs><path d="M8.500 6V2.500A1 1 0 0 1 9.500 1.500h11a1 1 0 0 1 1 1V6" fill="none" stroke="#1fb0ec" strokeWidth="1.800" /><path d="M.5 5h29v21a4 4 0 0 1-4 4h-21a4 4 0 0 1-4-4z" fill="url(#store)" /><path d="M9.500 12h5v5h-5z" fill="#f25022" /><path d="M15.500 12h5v5h-5z" fill="#7fba00" /><path d="M9.500 18h5v5h-5z" fill="#00a4ef" /><path d="M15.500 18h5v5h-5z" fill="#ffb900" /></svg>
        </Task>
        <Task><Chrome className="size-[30px]" /></Task>
        <Task dot>
          <svg viewBox="0 0 30 30" className="size-[30px]"><path d="M0 4a1.500 1.500 0 0 1 1.500-1.500H11L14 5H28v6H0z" fill="#dfa20c" /><path d="M0 8.500h11L14 5.500h15a1 1 0 0 1 1 1V28a1 1 0 0 1-1 1H1a1 1 0 0 1-1-1z" fill="#fccb44" /><path d="M6 29v-5a2.500 2.500 0 0 1 2.500-2.500h13A2.500 2.500 0 0 1 24 24v5z" fill="#1783d1" /><path d="M9.500 25.500h11" stroke="#0b5fa5" strokeWidth="1.500" /></svg>
        </Task>
        <Task><div className="flex size-[30px] items-center justify-center rounded-[12px] bg-[#0b5cff] pb-px font-['Inter'] text-[8.500px] leading-none font-semibold tracking-[-0.200px] text-white">zoom</div></Task>
        <Task badge="3"><div className="flex size-[30px] items-center justify-center bg-[#1c3faa] text-[25px] leading-none font-bold text-white">L</div></Task>
        <Task dot><div className="relative flex size-[30px] items-center justify-center"><i className="absolute h-[22px] w-[16px] rounded-[6px] bg-white" /><SiBrave className="relative size-[30px] text-[#fb4a1e]" /></div></Task>
        <Task dot badge="S" badgeCls="bg-[#455a64] text-[#c3ced3]"><Chrome className="size-[30px]" /></Task>
        <Task dot>
          <svg viewBox="0 0 24 30" className="h-[30px] w-[24px]"><path d="M1 26h22v4H1z" fill="#a8551c" /><path d="M1 25.500h22v2H1z" fill="#f3f3f3" /><path d="M1 2h22v24H1z" fill="#4fbfdc" /><path d="M4 0v4M8 0v4M12 0v4M16 0v4M20 0v4" stroke="#0e6a8c" strokeWidth="2" /><path d="M6 9h12M6 14h12M6 19h12" stroke="#12607f" strokeWidth="1.800" /></svg>
        </Task>
        <Task dot><RdpIcon className="size-[30px]" /></Task>
      </div>
      <div className="ml-auto flex items-center">
        <svg viewBox="0 0 16 9" className="w-[16px]" fill="none" stroke="#14191b" strokeWidth="1.300"><path d="M.5 8.500L8 1l7.500 7.500" /></svg>
        <svg viewBox="0 0 20 14" className="mb-[2px] ml-[12px] h-[14px] w-[20px]"><path d="M5 13a4.200 4.200 0 0 1-.5-8.300C6 .5 13 0 14.500 4.600 21 5 20.500 13 15.500 13z" fill="#e9eaea" stroke="#14191b" strokeWidth="1.400" /><path d="M4.500 5.500c2-5 8-5 9.500 0l2.500 3-6-1-5 2z" fill="#8c8c8c" /></svg>
        <svg viewBox="0 0 20 16" className="ml-[15px] h-[16px] w-[19px]" fill="none" stroke="#14191b" strokeWidth="1.500"><path d="M1 6a13 13 0 0 1 18 0" stroke="#94a7ab" /><path d="M4 9a8.500 8.500 0 0 1 12 0M6.800 12a4.800 4.800 0 0 1 6.400 0" /><circle cx="10" cy="14" r="1.200" fill="#14191b" /></svg>
        <svg viewBox="0 0 20 16" className="ml-[11px] h-[16px] w-[20px]" fill="none" stroke="#14191b" strokeWidth="1.300"><path d="M1 5.500h3L8.500 1.500v13L4 10.500H1zM11 5.500a4 4 0 0 1 0 5M13.500 3.500a7 7 0 0 1 0 9" /><path d="M16.500 1.500a10 10 0 0 1 0 13" stroke="#94a7ab" /></svg>
        <svg viewBox="0 0 20 13" className="ml-[11px] h-[13px] w-[20px]"><rect x=".7" y=".7" width="16" height="11.600" rx="2.500" fill="none" stroke="#14191b" strokeWidth="1.400" /><rect x="3" y="3" width="7" height="7" fill="#14191b" /><path d="M18 4.500q2 0 2 2t-2 2z" fill="#14191b" /></svg>
        <div className="ml-[18px] w-[76px] pb-[3px] text-right tracking-[-0.280px]"><div>23:05</div><div>15-05-2024</div></div>
        <svg viewBox="0 0 16 18" className="mr-[26px] ml-[14px] h-[18px] w-[15px]" fill="none" stroke="#14191b" strokeWidth="1.300"><path d="M8 1c9 1 9 14 1 16-3 .5-6-.5-8-3.500 7-1 9-6 7-12.500z" /></svg>
      </div>
    </div>
  );
}

export default function App() {
  return (
    <div className="relative h-[1080px] w-[1920px] overflow-hidden bg-white font-['Open_Sans','Noto_Sans',sans-serif]">
      <BrowserTop />
      <AwsHeader />
      <Console />
      <AwsFooter />
      <Taskbar />
      <RdpWindow />
    </div>
  );
}
